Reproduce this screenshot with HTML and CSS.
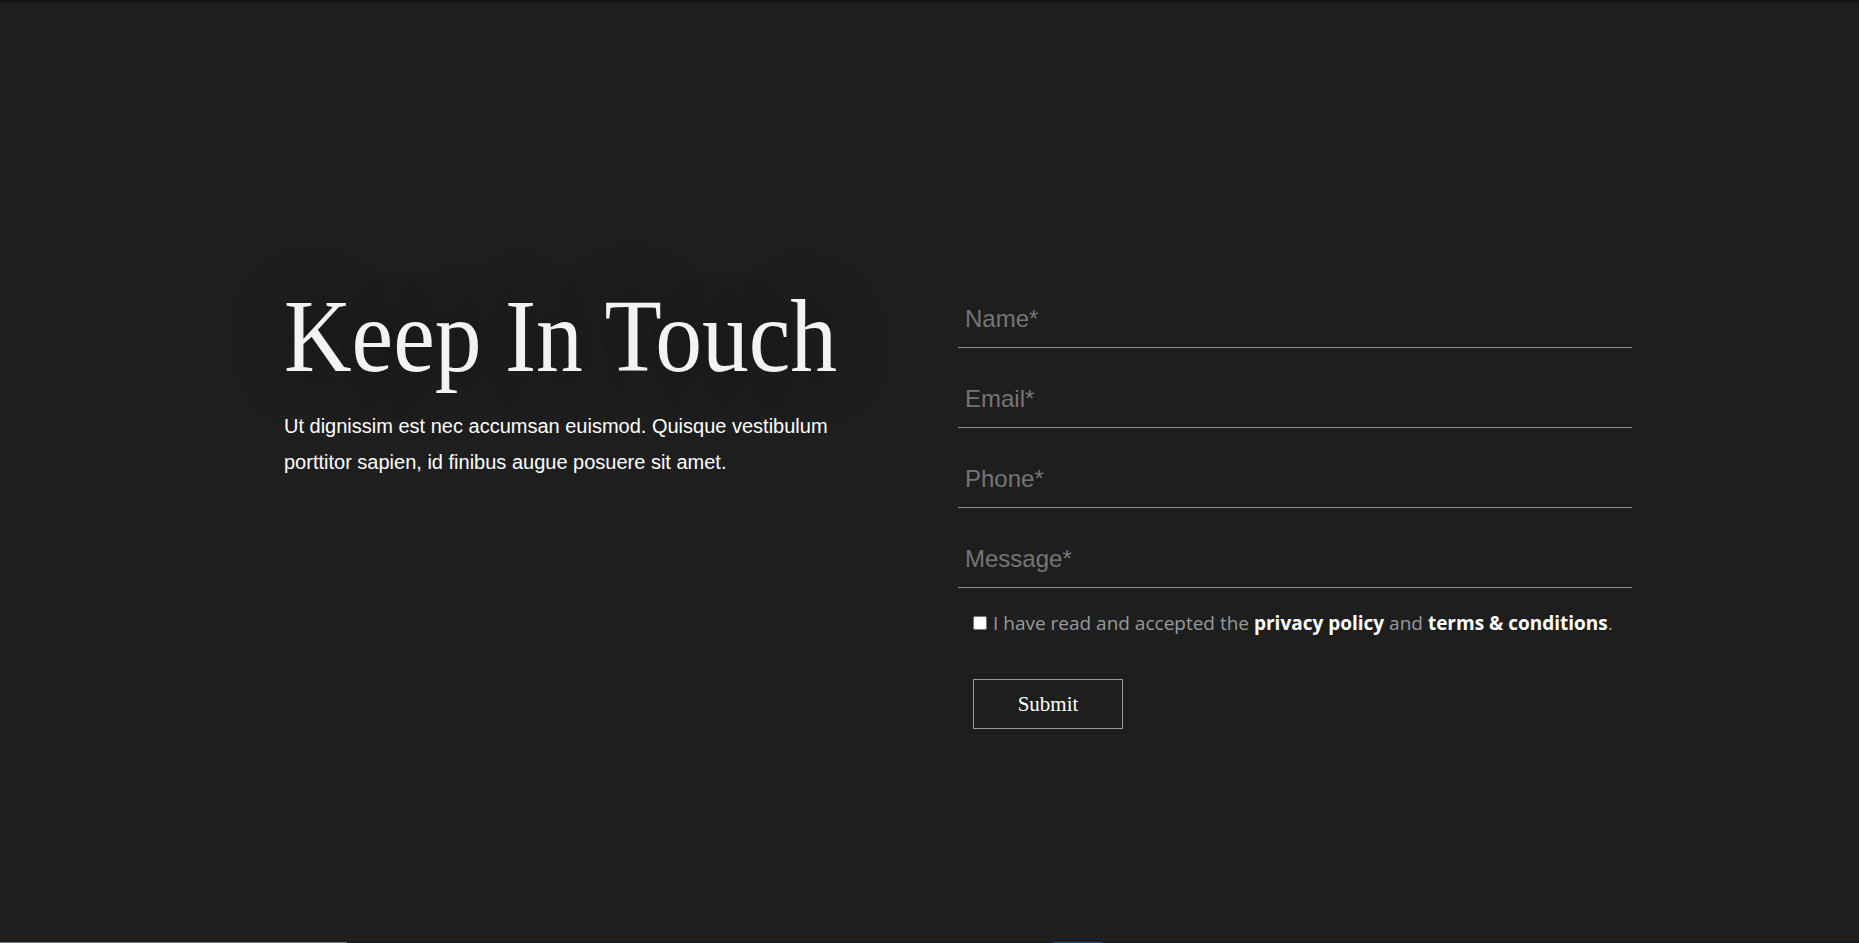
FILE: index.html
```html
<!DOCTYPE html>
<html lang="en">
<head>
<meta charset="utf-8">
<title>Keep In Touch</title>
<link rel="stylesheet" href="styles.css">
</head>
<body>
<div class="top-bar"></div>
<main class="contact">
  <section class="intro">
    <h1 class="title"><span class="title-text">Keep In Touch</span></h1>
    <p class="lead">Ut dignissim est nec accumsan euismod. Quisque vestibulum porttitor sapien, id finibus augue posuere sit amet.</p>
  </section>
  <form class="form" onsubmit="return false">
    <input class="field" type="text" placeholder="Name*">
    <input class="field" type="email" placeholder="Email*">
    <input class="field" type="tel" placeholder="Phone*">
    <textarea class="field area" rows="1" placeholder="Message*"></textarea>
    <label class="consent">
      <input class="check" type="checkbox">
      <span class="consent-text">I have read and accepted the <b>privacy policy</b> and <b>terms &amp; conditions</b>.</span>
    </label>
    <button class="submit" type="submit">Submit</button>
  </form>
</main>
<div class="bottom-strip"><span class="strip-gray"></span><span class="strip-gap"></span><span class="strip-blue"></span></div>
</body>
</html>
```

FILE: styles.css
```css
html, body {
  margin: 0;
  padding: 0;
  background: #1e1e1e;
}
body {
  min-height: 100vh;
  display: flex;
  flex-direction: column;
  font-family: "Liberation Sans", Arial, sans-serif;
  overflow: hidden;
}
.top-bar {
  height: 3px;
  background: #161412;
  flex: none;
}
.contact {
  flex: 1;
  display: flex;
  align-items: flex-start;
  padding: 280px 0 0 284px;
}
.intro {
  width: 674px;
  flex: none;
}
.title {
  margin: 1px 0 0 0;
  font-family: "Liberation Serif", "Times New Roman", serif;
  font-weight: 400;
  font-size: 104px;
  line-height: 104px;
  color: #f3f3f3;
  white-space: nowrap;
}
.title-text {
  display: inline-block;
  transform: scaleX(0.9);
  transform-origin: left center;
  text-shadow: 0 0 60px rgba(0, 0, 0, 0.45);
}
.lead {
  margin: 20px 0 0 0;
  max-width: 600px;
  font-size: 20px;
  line-height: 36px;
  color: #ffffff;
}
.form {
  width: 674px;
  flex: none;
  display: flex;
  flex-direction: column;
  align-items: stretch;
}
.field {
  display: block;
  box-sizing: border-box;
  width: 100%;
  margin: 0 0 15px 0;
  padding: 22px 7px 14px;
  height: 65px;
  border: 0;
  border-bottom: 1px solid #8c8c8c;
  background: transparent;
  color: #e0e0e0;
  font-family: "Liberation Sans", Arial, sans-serif;
  font-size: 24px;
  line-height: 28px;
  outline: none;
}
.field::placeholder {
  color: #757575;
  opacity: 1;
}
.area {
  resize: none;
  overflow: hidden;
}
.consent {
  margin: 7px 0 0 0;
  padding-left: 15px;
  display: flex;
  align-items: center;
  height: 26px;
  font-family: "Open Sans", "Noto Sans", sans-serif;
  font-size: 19px;
  line-height: 26px;
  color: #9a9a9a;
  white-space: nowrap;
}
.consent b {
  color: #ffffff;
  font-weight: 700;
}
.check {
  margin: 0 6px 0 0;
  width: 14px;
  height: 14px;
  flex: none;
}
.submit {
  margin: 43px 0 0 15px;
  align-self: flex-start;
  width: 150px;
  height: 50px;
  box-sizing: border-box;
  background: transparent;
  border: 1px solid #9a9a9a;
  color: #ffffff;
  font-family: "Liberation Serif", "Times New Roman", serif;
  font-size: 21px;
  cursor: pointer;
}
.bottom-strip {
  flex: none;
  height: 1px;
  display: flex;
  background: #0d1b26;
}
.strip-gray {
  width: 347px;
  background: #6e7880;
}
.strip-gap {
  width: 706px;
}
.strip-blue {
  width: 49px;
  background: #1f4f8a;
}
```
